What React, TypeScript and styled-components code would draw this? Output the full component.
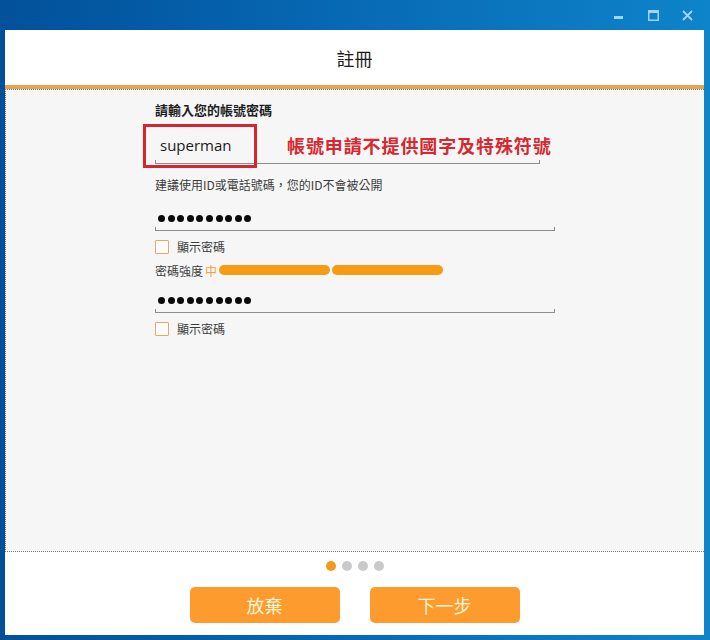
import React from 'react';
import styled, { createGlobalStyle } from 'styled-components';

const GlobalStyle = createGlobalStyle`
  html, body {
    margin: 0;
    padding: 0;
  }
  body {
    font-family: 'Noto Sans', 'Noto Sans CJK TC', sans-serif;
  }
`;

const Frame = styled.div`
  width: 710px;
  height: 640px;
  box-sizing: border-box;
  display: flex;
  flex-direction: column;
  background: linear-gradient(90deg, #02509a 0%, #0767b2 45%, #0e84ca 100%);
  padding: 0 6px 5px 5px;
`;

const TitleBar = styled.div`
  height: 30px;
  display: flex;
  justify-content: flex-end;
  align-items: center;
  gap: 18px;
  padding-right: 9px;
`;

const WinButton = styled.div`
  width: 16px;
  height: 16px;
  display: flex;
  align-items: center;
  justify-content: center;
`;

const Window = styled.div`
  flex: 1;
  display: flex;
  flex-direction: column;
  background: #ffffff;
`;

const Header = styled.header`
  height: 55px;
  display: flex;
  align-items: center;
  justify-content: center;
  font-family: 'Noto Sans CJK TC', sans-serif;
  font-size: 18px;
  color: #1d1d1d;
`;

const OrangeRule = styled.div`
  height: 4px;
  background: #eba24c;
`;

const Content = styled.main`
  flex: 1;
  background: #f6f6f6;
  border-top: 1px dotted #777;
  border-bottom: 1px dotted #777;
  border-left: 1px dotted #777;
  padding-left: 149px;
  display: flex;
  flex-direction: column;
  font-family: 'Noto Sans CJK TC', sans-serif;
`;

const Label = styled.div`
  margin-top: 11px;
  font-size: 13px;
  line-height: 18px;
  font-weight: 700;
  color: #1e1e1e;
`;

const Field = styled.div<{ $width: number; $top: number }>`
  position: relative;
  width: ${p => p.$width}px;
  margin-top: ${p => p.$top}px;
`;

const Value = styled.div`
  padding-left: 5px;
  padding-top: 11px;
  font-family: 'Open Sans', 'Noto Sans', sans-serif;
  font-size: 15px;
  line-height: 20px;
  color: #1a1a1a;
`;

const Underline = styled.div<{ $top: number }>`
  height: 3px;
  margin-top: ${p => p.$top}px;
  border: 1px solid #8d8d8d;
  border-top: none;
`;

const Annotation = styled.div`
  position: absolute;
  left: -12px;
  top: 0;
  width: 108px;
  height: 38px;
  border: 3px solid #d52630;
`;

const AnnotationText = styled.div`
  position: absolute;
  left: 132px;
  top: 10px;
  white-space: nowrap;
  font-size: 18px;
  line-height: 22px;
  font-weight: 700;
  letter-spacing: 0.9px;
  color: #d8272f;
`;

const Hint = styled.div`
  margin-top: 13px;
  font-size: 12px;
  line-height: 16px;
  color: #3c3c3c;
`;

const Dots = styled.div`
  display: flex;
  gap: 2.6px;
  height: 16px;
  align-items: center;
  padding-left: 3px;
`;

const Dot = styled.span`
  width: 7px;
  height: 7px;
  border-radius: 50%;
  background: #0a0a0a;
`;

const CheckRow = styled.label`
  display: flex;
  align-items: center;
  gap: 8px;
  margin-top: 8px;
  height: 15px;
  font-size: 12px;
  color: #3c3c3c;
`;

const Box = styled.span`
  width: 12px;
  height: 12px;
  border: 1.5px solid #e3a771;
  border-radius: 1px;
  background: #fbfbfb;
`;

const StrengthRow = styled.div`
  display: flex;
  align-items: center;
  height: 14px;
  margin-top: 9px;
  font-size: 12px;
  color: #3c3c3c;
`;

const Level = styled.span`
  color: #f2a13a;
  margin: 0 2px 0 2px;
`;

const Bar = styled.span`
  width: 111px;
  height: 10px;
  border-radius: 5px;
  background: #f59c14;
  margin-right: 2px;
`;

const Footer = styled.footer`
  height: 83px;
  display: flex;
  flex-direction: column;
  align-items: center;
`;

const Pager = styled.div`
  display: flex;
  gap: 6px;
  margin-top: 9px;
`;

const PageDot = styled.span<{ $active?: boolean }>`
  width: 10px;
  height: 10px;
  border-radius: 50%;
  background: ${p => (p.$active ? '#f39a1e' : '#c9c9c9')};
`;

const Buttons = styled.div`
  display: flex;
  gap: 30px;
  margin-top: 16px;
`;

const Button = styled.button`
  width: 150px;
  height: 36px;
  border: none;
  border-radius: 5px;
  background: #fd9b2e;
  color: #fff6d6;
  font-family: 'Noto Sans CJK TC', sans-serif;
  font-size: 18px;
  cursor: pointer;
`;

const PasswordDots: React.FC = () => (
  <Dots>
    {Array.from({ length: 10 }).map((_, i) => (
      <Dot key={i} />
    ))}
  </Dots>
);

const App: React.FC = () => {
  return (
    <>
      <GlobalStyle />
      <Frame>
        <TitleBar>
          <WinButton>
            <svg width="10" height="10" viewBox="0 0 10 10">
              <rect x="0" y="6" width="9" height="3" fill="#9fd6f7" />
            </svg>
          </WinButton>
          <WinButton>
            <svg width="11" height="11" viewBox="0 0 11 11">
              <rect x="0.75" y="0.75" width="9.5" height="9.5" fill="none" stroke="#9fd6f7" strokeWidth="1.5" />
              <rect x="0" y="0" width="11" height="3" fill="#9fd6f7" />
            </svg>
          </WinButton>
          <WinButton>
            <svg width="11" height="11" viewBox="0 0 11 11">
              <path d="M1 1 L10 10 M10 1 L1 10" stroke="#9fd6f7" strokeWidth="1.8" />
            </svg>
          </WinButton>
        </TitleBar>
        <Window>
          <Header>註冊</Header>
          <OrangeRule />
          <Content>
            <Label>請輸入您的帳號密碼</Label>
            <Field $width={385} $top={5}>
              <Value>superman</Value>
              <Underline $top={5} />
              <Annotation />
              <AnnotationText>帳號申請不提供國字及特殊符號</AnnotationText>
            </Field>
            <Hint>建議使用ID或電話號碼，您的ID不會被公開</Hint>
            <Field $width={400} $top={17}>
              <PasswordDots />
              <Underline $top={1} />
            </Field>
            <CheckRow>
              <Box />
              顯示密碼
            </CheckRow>
            <StrengthRow>
              密碼強度<Level>中</Level>
              <Bar />
              <Bar />
            </StrengthRow>
            <Field $width={400} $top={15}>
              <PasswordDots />
              <Underline $top={1} />
            </Field>
            <CheckRow>
              <Box />
              顯示密碼
            </CheckRow>
          </Content>
          <Footer>
            <Pager>
              <PageDot $active />
              <PageDot />
              <PageDot />
              <PageDot />
            </Pager>
            <Buttons>
              <Button>放棄</Button>
              <Button>下一步</Button>
            </Buttons>
          </Footer>
        </Window>
      </Frame>
    </>
  );
};

export default App;
